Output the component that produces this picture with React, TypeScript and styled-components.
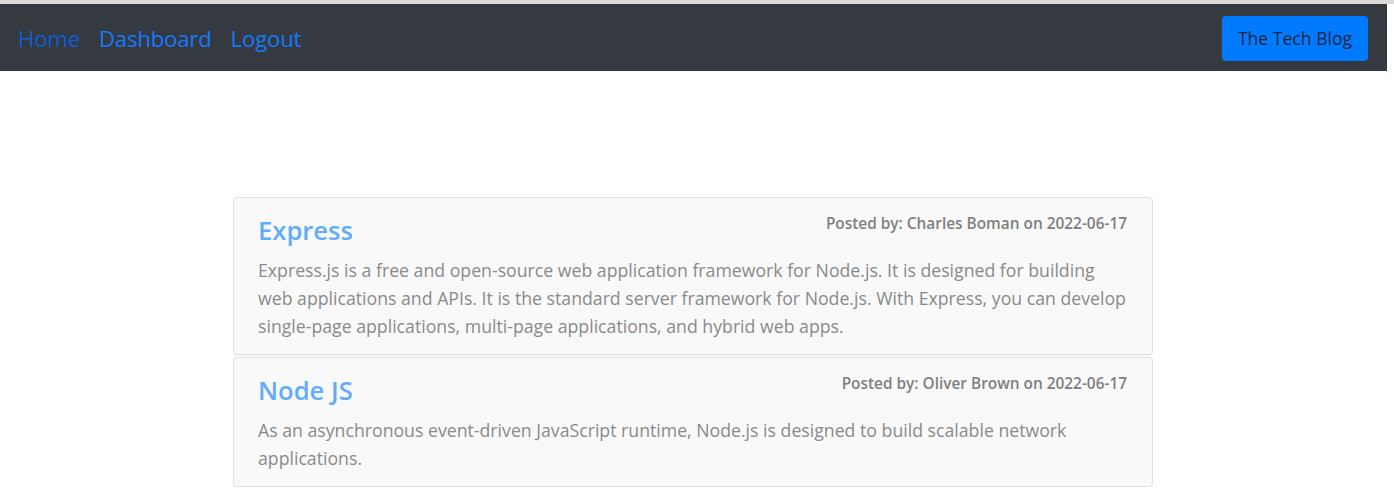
import React from "react";
import styled, { createGlobalStyle } from "styled-components";

const Global = createGlobalStyle`
  html, body { margin: 0; padding: 0; background: #ffffff; }
  body { font-family: "Open Sans", "Noto Sans", "DejaVu Sans", sans-serif; }
  * { box-sizing: border-box; }
`;

const Page = styled.div`
  width: 1387px;
`;

const TopStrip = styled.div`
  width: 1394px;
  height: 4px;
  background: #dadada;
`;

const Nav = styled.nav`
  height: 67px;
  background: #343a40;
  display: flex;
  align-items: center;
  justify-content: space-between;
  padding: 0 19px 0 18px;
`;

const Links = styled.div`
  display: flex;
  align-items: center;
  gap: 19px;
  padding-top: 2px;
`;

const NavLink = styled.a<{ $active?: boolean }>`
  font-size: 22.2px;
  color: ${(p) => (p.$active ? "#0b5ed7" : "#1479ff")};
  text-decoration: none;
  letter-spacing: -0.2px;
`;

const Brand = styled.button`
  height: 45px;
  width: 146px;
  background: #007bff;
  color: #1c2540;
  border: none;
  border-radius: 4px;
  font-family: inherit;
  font-size: 17.6px;
  padding: 0;
  margin-top: 1px;
`;

const Main = styled.main`
  width: 920px;
  margin: 126px 0 0 233px;
  display: flex;
  flex-direction: column;
  gap: 2px;
`;

const Card = styled.article`
  background: #f9f9f9;
  border: 1px solid #e1e1e1;
  border-radius: 4px;
  padding: 16px 24px 14px;
  box-shadow: 0 1px 1px rgba(0, 0, 0, 0.06);
`;

const Header = styled.header`
  display: flex;
  justify-content: space-between;
  align-items: flex-start;
`;

const Title = styled.h2`
  margin: 0;
  font-size: 25.6px;
  line-height: 34px;
  font-weight: 600;
  color: #62acff;
`;

const Meta = styled.span`
  font-size: 15.4px;
  line-height: 20px;
  font-weight: 600;
  color: #808080;
  margin-right: 1px;
`;

const Body = styled.p`
  margin: 8px 0 0;
  font-size: 17.7px;
  line-height: 28px;
  color: #8a8a8a;
`;

const posts = [
  {
    title: "Express",
    author: "Charles Boman",
    date: "2022-06-17",
    body:
      "Express.js is a free and open-source web application framework for Node.js. It is designed for building web applications and APIs. It is the standard server framework for Node.js. With Express, you can develop single-page applications, multi-page applications, and hybrid web apps.",
  },
  {
    title: "Node JS",
    author: "Oliver Brown",
    date: "2022-06-17",
    body:
      "As an asynchronous event-driven JavaScript runtime, Node.js is designed to build scalable network applications.",
  },
];

export default function App() {
  return (
    <>
      <Global />
      <TopStrip />
      <Page>
        <Nav>
          <Links>
            <NavLink href="#" $active>Home</NavLink>
            <NavLink href="#">Dashboard</NavLink>
            <NavLink href="#">Logout</NavLink>
          </Links>
          <Brand>The Tech Blog</Brand>
        </Nav>
        <Main>
          {posts.map((p) => (
            <Card key={p.title}>
              <Header>
                <Title>{p.title}</Title>
                <Meta>
                  Posted by: {p.author} on {p.date}
                </Meta>
              </Header>
              <Body>{p.body}</Body>
            </Card>
          ))}
        </Main>
      </Page>
    </>
  );
}
